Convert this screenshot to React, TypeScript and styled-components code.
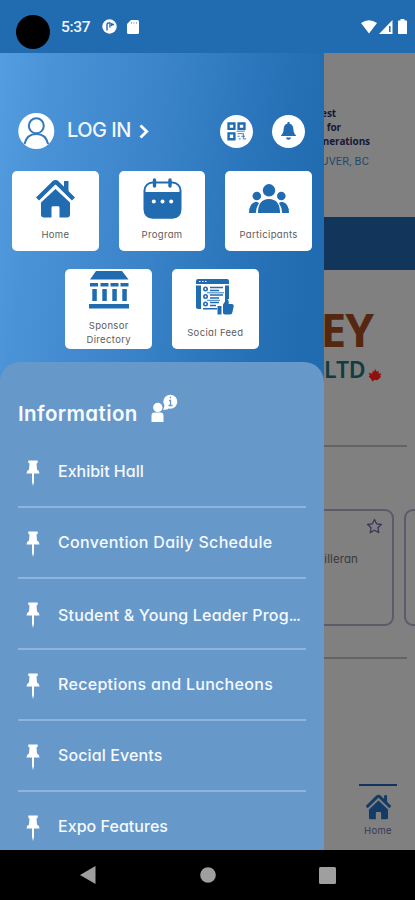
import React from "react";
import styled, { createGlobalStyle } from "styled-components";

const Global = createGlobalStyle`
  * { box-sizing: border-box; }
  html, body { margin: 0; padding: 0; background: #000; }
  body { font-family: Inter, "Open Sans", sans-serif; font-feature-settings: "cv11" 1; }
`;

const BLUE = "#216bb0";

const Phone = styled.div`
  width: 415px;
  height: 900px;
  display: flex;
  flex-direction: column;
  overflow: hidden;
  background: #000;
`;

const StatusBar = styled.header`
  flex: 0 0 53px;
  display: flex;
  align-items: flex-start;
  background: ${BLUE};
  padding: 15px 7px 0 16px;
`;
const Camera = styled.div`
  width: 34px;
  height: 34px;
  border-radius: 50%;
  background: #000;
`;
const Clock = styled.span`
  margin: 3px 11px 0 11px;
  width: 30px;
  font: 500 15.5px/19px Roboto, sans-serif;
  letter-spacing: -0.3px;
  color: #eef5fc;
  white-space: nowrap;
`;
const StatusIcons = styled.div<{ $end?: boolean }>`
  display: flex;
  align-items: center;
  height: 15px;
  margin-top: 4px;
  margin-left: ${(p) => (p.$end ? "auto" : "0")};
  gap: ${(p) => (p.$end ? 1.5 : 10)}px;
`;

const Body = styled.div`
  flex: 0 0 797px;
  display: grid;
  grid-template-columns: 324px 91px;
`;

const Drawer = styled.aside`
  display: flex;
  flex-direction: column;
  height: 797px;
  overflow: hidden;
  background: linear-gradient(98deg, #549de1 0%, #4b93d7 12%, #3b84ca 38%, #2a75bb 60%, ${BLUE} 78%);
`;
const Account = styled.div`
  display: flex;
  align-items: center;
  height: 36px;
  margin: 60px 19px 0 18px;
`;
const LoginText = styled.span`
  margin: 0 7px 2px 12px;
  width: 65px;
  font-size: 20px;
  line-height: 24px;
  font-weight: 500;
  letter-spacing: -0.5px;
  color: #f1f7fd;
  white-space: nowrap;
`;
const RoundButton = styled.div<{ $push?: boolean }>`
  width: 33px;
  height: 33px;
  border-radius: 50%;
  background: #fff;
  display: grid;
  place-items: center;
  margin-left: ${(p) => (p.$push ? "auto" : "19px")};
`;
const Tiles = styled.div`
  display: flex;
  flex-wrap: wrap;
  justify-content: center;
  gap: 18px 20px;
  padding: 0 12px;
  margin-top: 22px;
`;
const Tile = styled.div`
  width: 86.6px;
  height: 80px;
  border-radius: 5px;
  background: #fff;
  display: flex;
  flex-direction: column;
  align-items: center;
`;
const TileIcon = styled.div<{ $h: number }>`
  height: ${(p) => p.$h}px;
  display: flex;
  align-items: center;
  padding-bottom: 2px;
`;
const TileLabel = styled.div`
  display: flex;
  flex-direction: column;
  align-items: center;
  font-size: 9.5px;
  line-height: 13.6px;
  letter-spacing: 0.35px;
  color: #5c5c5c;
  white-space: nowrap;
`;

const Info = styled.section`
  flex: 1;
  min-height: 0;
  margin-top: 13px;
  border-radius: 20px 20px 0 0;
  background: #6698ca;
  padding: 32px 18px 0;
`;
const InfoHead = styled.div`
  display: flex;
  align-items: flex-start;
  height: 43px;
`;
const InfoTitle = styled.h1`
  margin: 7px 14px 0 0;
  width: 119px;
  font-size: 20.5px;
  line-height: 26px;
  font-weight: 600;
  letter-spacing: 0.4px;
  color: #f8fbff;
  white-space: nowrap;
`;
const Item = styled.div`
  display: flex;
  align-items: center;
  height: 71px;
  padding: 3px 0 0 8px;
  border-bottom: 2px solid #8cb4dc;
  &:last-child { border-bottom-color: transparent; }
`;
const ItemText = styled.span<{ $track: number; $low?: boolean }>`
  margin: 0 0 ${(p) => (p.$low ? 1 : 4)}px 18px;
  font-size: 16px;
  line-height: 22px;
  font-weight: 500;
  letter-spacing: ${(p) => p.$track}px;
  color: #f6faff;
  white-space: nowrap;
`;
const Dots = styled.span`
  letter-spacing: -1.3px;
`;

const Page = styled.main`
  height: 797px;
  overflow: hidden;
  background: #808080;
  display: flex;
  flex-direction: column;
`;
const Banner = styled.div`
  height: 164px;
  padding-top: 53px;
  display: flex;
  flex-direction: column;
`;
const BannerLine = styled.div<{ $right: number }>`
  width: ${(p) => p.$right}px;
  display: flex;
  justify-content: flex-end;
  font: 700 10px/14px "Open Sans", sans-serif;
  letter-spacing: -0.1px;
  color: #16183a;
  white-space: nowrap;
`;
const Place = styled(BannerLine)`
  font: 400 11px/15px Roboto, sans-serif;
  margin-top: 6px;
  letter-spacing: 0.2px;
  color: #1f4a6c;
`;
const Stripe = styled.div`
  height: 53px;
  background: #12365b;
`;
const Sponsor = styled.div`
  height: 175px;
  padding-top: 35px;
`;
const SponsorName = styled.div`
  width: 49px;
  display: flex;
  justify-content: flex-end;
  font: 700 46px/48px "Noto Sans", sans-serif;
  letter-spacing: -1px;
  color: #562710;
`;
const SponsorLtd = styled.div`
  display: flex;
  align-items: center;
  gap: 3px;
  margin-top: 2px;
  font: 600 23px/24px "Noto Sans", sans-serif;
  letter-spacing: -0.2px;
  color: #123d40;
  & > svg { margin-top: 14px; }
`;
const Rule = styled.div`
  width: 83px;
  height: 2px;
  background: #646465;
`;
const Cards = styled.div`
  display: flex;
  gap: 10px;
  height: 210px;
  padding-top: 62px;
`;
const Card = styled.div<{ $next?: boolean }>`
  flex: 0 0 ${(p) => (p.$next ? 30 : 70)}px;
  height: 117px;
  border: 2px solid #5b5b6c;
  border-left-width: ${(p) => (p.$next ? 2 : 0)}px;
  border-radius: ${(p) => (p.$next ? "9px 0 0 9px" : "0 9px 9px 0")};
  padding: 7px 9px 0 0;
  display: flex;
  flex-direction: column;
  align-items: flex-end;
`;
const Speaker = styled.div`
  margin: 16px 25px 0 0;
  font-size: 11.5px;
  line-height: 16px;
  letter-spacing: 0.1px;
  color: #3a3a3a;
`;
const Tab = styled.div`
  margin: 125px 0 0 35px;
  width: 38px;
  display: flex;
  flex-direction: column;
  align-items: center;
  border-top: 2px solid #13345f;
  padding-top: 8px;
  gap: 5px;
  font-size: 9.5px;
  line-height: 12px;
  letter-spacing: 0.35px;
  color: #37375a;
`;
const NavBar = styled.nav`
  flex: 1;
  display: flex;
  justify-content: space-between;
  align-items: center;
  padding: 0 79px 0 80px;
`;

const HomeIcon = ({ w = 41, color = BLUE }: { w?: number; color?: string }) => (
  <svg width={w} height={w * 0.95} viewBox="0 0 41 39">
    <path d="M29 2h4.500v11L29 9z" fill={color} />
    <path d="M2.500 20 18.800 4q1.700-1.500 3.400 0L38.500 20" fill="none" stroke={color} strokeWidth="4.400" strokeLinejoin="round" />
    <path d="M20.500 10 35 23.500V36q0 2.500-2.500 2.500h-8V28.800q0-1.500-1.500-1.500h-5q-1.500 0-1.500 1.500v9.700h-8Q6 38.500 6 36V23.500z" fill={color} />
  </svg>
);
const CalendarIcon = () => (
  <svg width="39" height="41" viewBox="0 0 39 41">
    <rect x="1.500" y="4.500" width="36" height="35" rx="8" fill="#fff" stroke={BLUE} strokeWidth="2" />
    <path d="M1 14h37v18q0 8.500-8.500 8.500h-20Q1 40.500 1 32z" fill={BLUE} />
    <path d="M11.500 2v6M27 2v6" stroke={BLUE} strokeWidth="3.400" strokeLinecap="round" />
    <circle cx="10.800" cy="23.500" r="2" fill="#fff" />
    <circle cx="19.500" cy="23.500" r="2" fill="#fff" />
    <circle cx="28.200" cy="23.500" r="2" fill="#fff" />
  </svg>
);
const PeopleIcon = () => (
  <svg width="40" height="29" viewBox="0 0 40 29" fill={BLUE}>
    <circle cx="20" cy="6.300" r="6.200" />
    <circle cx="7.800" cy="12" r="4.300" />
    <circle cx="32.300" cy="12" r="4.300" />
    <path d="M9 29q0-14 11-14t11 14zM0 29q0-10 7-11.300 2 .2 3 1.300Q7.200 23.200 6.800 29zM40 29q0-10-7-11.300-2 .2-3 1.300 2.800 4.200 3.200 10z" />
  </svg>
);
const BankIcon = () => (
  <svg width="40" height="46" viewBox="0 0 40 46" fill={BLUE}>
    <path d="M7 1h26l6.500 8.500H1zM1 13h8v3.500H1zm10.500 0h8v3.500h-8zm10 0h8v3.500h-8zm10 0H39.500v3.500h-8zM3.300 19h4.500v12H3.300zM13.300 19h4.500v12h-4.500zM23.300 19h4.500v12h-4.500zM33.300 19h4.500v12h-4.500zM0 34h40v4.500H0z" />
  </svg>
);
const FeedIcon = () => (
  <svg width="38" height="36" viewBox="0 0 38 36">
    <path d="M2 0h29q2 0 2 2v3H0V2q0-2 2-2z" fill={BLUE} />
    <path d="M3 2.500h1.500m1.500 0h1.500m1.500 0h1.500" stroke="#fff" strokeWidth="1.200" />
    <path d="M0 6.500h5V30H2q-2 0-2-2zM29 6.500h4V20h-4zM7 29h14v1.500H7z" fill={BLUE} />
    <path d="M14 8.500h13M14 11.500h9M14 16h13M14 19h9M14 23.500h9M14 26.500h6" stroke={BLUE} strokeWidth="1.600" />
    <path d="M11 13.800h17M11 21.300h13" stroke={BLUE} strokeWidth=".9" />
    <g fill={BLUE}>
      <circle cx="9.500" cy="10" r="2.500" /><circle cx="9.500" cy="17.500" r="2.500" /><circle cx="9.500" cy="25" r="2.500" />
    </g>
    <g fill="#fff">
      <circle cx="9.500" cy="10" r=".9" /><circle cx="9.500" cy="17.500" r=".9" /><circle cx="9.500" cy="25" r=".9" />
    </g>
    <path d="M27 25.500l2-3V20q3.500-1 3.700 3v2h3q2.300 0 2 2.300L36.500 33q-.3 2.500-2.700 2.500h-5L27 34.500z" fill={BLUE} />
    <path d="M21.500 27h4v8.500h-4z" fill={BLUE} />
  </svg>
);
const UserIcon = () => (
  <svg width="37" height="36" viewBox="0 0 37 36">
    <circle cx="18.300" cy="18" r="18" fill="#fff" />
    <g fill="none" stroke="#3479bd" strokeWidth="2">
      <circle cx="18.300" cy="12.800" r="7.500" />
      <path d="M6.500 31q2.300-10 11.800-10t11.800 10" />
    </g>
  </svg>
);
const QrIcon = () => (
  <svg width="19" height="19" viewBox="0 0 18 18" fill="none" stroke={BLUE}>
    <path d="M1.500 1.500h5.500v5H1.500zM11 1.500h5.500v5H11zM1.500 10.800h5.500v5.500H1.500z" strokeWidth="2.300" />
    <path d="M10 11h5m-5 2.500h2m1.500 0H17M11 16h2m2 0h3M15.500 10.500v5M9 8.700h8" strokeWidth=".8" />
  </svg>
);
const BellIcon = () => (
  <svg width="15" height="18" viewBox="0 0 15 18" fill={BLUE}>
    <path d="M6.500 0h2v1.500Q12 2.500 12.300 6.500q.2 5 2.700 7V14H0v-.5q2.500-2 2.700-7Q3 2.500 6.500 1.500zM5 15.500h5q-.3 2.300-2.500 2.300T5 15.500z" />
  </svg>
);
const InfoIcon = () => (
  <svg width="27" height="28" viewBox="0 0 27 28" fill="#fff">
    <circle cx="6.800" cy="13.500" r="4.700" />
    <path d="M.5 28v-6.500q0-3 3-3h6q3 0 3 3V28zM12 16l2-5.500h5l-2 4.700z" />
    <circle cx="19.300" cy="7.700" r="7" />
    <path d="M18 6.500h1.500v5m-2 0h4M18.700 3.500h1.400" fill="none" stroke="#6698ca" strokeWidth="1.300" />
  </svg>
);
const PinIcon = () => (
  <svg width="14" height="27" viewBox="0 0 14 27" fill="#fff">
    <path d="M2.300.5h9.400v2.300l-1.200.8.5 6q2.500 1.200 2.500 4H8v8.500L7 26l-1-3.900v-8.500H.5q0-2.800 2.500-4l.5-6-1.200-.8z" />
  </svg>
);

const ITEMS: { label: string; track: number; cut?: boolean }[] = [
  { label: "Exhibit Hall", track: 0 },
  { label: "Convention Daily Schedule", track: 0.33 },
  { label: "Student & Young Leader Prog", track: 0.2, cut: true },
  { label: "Receptions and Luncheons", track: 0.3 },
  { label: "Social Events", track: 0.12 },
  { label: "Expo Features", track: 0.04 },
];

export default function App() {
  return (
    <Phone>
      <Global />
      <StatusBar>
        <Camera />
        <Clock>5:37</Clock>
        <StatusIcons>
          <svg width="15" height="15" viewBox="0 0 15 15">
            <circle cx="7.500" cy="7.500" r="7.200" fill="#fff" />
            <path d="M5 11.500V5.500Q5 4 6.500 4H8v4.500M9.300 5.500h2.800M9.700 4v3" fill="none" stroke={BLUE} strokeWidth="1.400" />
          </svg>
          <svg width="12" height="14" viewBox="0 0 12 14">
            <path d="M4 0h6.500Q12 0 12 1.500v11q0 1.500-1.500 1.500h-9Q0 14 0 12.500V4z" fill="#fff" />
            <path d="M4.500 2v2M7 2v2M9.500 2v2" stroke="#9abbe0" />
          </svg>
        </StatusIcons>
        <StatusIcons $end>
          <svg width="16" height="14" viewBox="0 0 16 14"><path d="M0 3Q8-2.500 16 3L8 13.500z" fill="#fff" /></svg>
          <svg width="14" height="14" viewBox="0 0 14 14">
            <path d="M13.500 0v14H0z" fill="#fff" /><path d="M10.800 6v6" stroke={BLUE} strokeWidth="1.500" />
          </svg>
          <svg width="14" height="15" viewBox="0 0 14 15"><path d="M6.500 0h4v1.500h2q.5 0 .5.500v12.500q0 .5-.5.500h-8q-.5 0-.5-.5V2q0-.5.5-.5h2z" fill="#fff" /></svg>
        </StatusIcons>
      </StatusBar>

      <Body>
        <Drawer>
          <Account>
            <UserIcon />
            <LoginText>LOG IN</LoginText>
            <svg width="10" height="15" viewBox="0 0 10 15"><path d="M1.500 1.500 7.700 7.500l-6.200 6" fill="none" stroke="#fff" strokeWidth="2.800" /></svg>
            <RoundButton $push><QrIcon /></RoundButton>
            <RoundButton><BellIcon /></RoundButton>
          </Account>
          <Tiles>
            <Tile><TileIcon $h={57}><HomeIcon /></TileIcon><TileLabel>Home</TileLabel></Tile>
            <Tile><TileIcon $h={57}><CalendarIcon /></TileIcon><TileLabel>Program</TileLabel></Tile>
            <Tile><TileIcon $h={57}><PeopleIcon /></TileIcon><TileLabel>Participants</TileLabel></Tile>
            <Tile>
              <TileIcon $h={50}><BankIcon /></TileIcon>
              <TileLabel><span>Sponsor</span><span>Directory</span></TileLabel>
            </Tile>
            <Tile><TileIcon $h={57}><FeedIcon /></TileIcon><TileLabel>Social Feed</TileLabel></Tile>
          </Tiles>
          <Info>
            <InfoHead><InfoTitle>Information</InfoTitle><InfoIcon /></InfoHead>
            {ITEMS.map(({ label, track, cut }) => (
              <Item key={label}>
                <PinIcon />
                <ItemText $track={track} $low={cut}>{label}{cut && <Dots>...</Dots>}</ItemText>
              </Item>
            ))}
          </Info>
        </Drawer>

        <Page>
          <Banner>
            <BannerLine $right={12}>est</BannerLine>
            <BannerLine $right={17}>for</BannerLine>
            <BannerLine $right={46}>enerations</BannerLine>
            <Place $right={45}>UVER, BC</Place>
          </Banner>
          <Stripe />
          <Sponsor>
            <SponsorName>EY</SponsorName>
            <SponsorLtd>
              LTD
              <svg width="14" height="13" viewBox="0 0 14 14"><path d="M7 0l2 3 2-1v3l3-.5-1.500 3 1 1-4 3.500-2.500-.5-3 2L3 11 0 8l1.500-.500L0 4l4 1 .5-3L6 3z" fill="#930d0d" /></svg>
            </SponsorLtd>
          </Sponsor>
          <Rule />
          <Cards>
            <Card>
              <svg width="17" height="17" viewBox="0 0 17 17"><path d="M8.500 1.500l2.100 4.300 4.800.7-3.500 3.300.9 4.800-4.300-2.300-4.300 2.300.9-4.800-3.500-3.300 4.800-.7z" fill="none" stroke="#36365a" strokeWidth="1.300" strokeLinejoin="round" /></svg>
              <Speaker>illeran</Speaker>
            </Card>
            <Card $next />
          </Cards>
          <Rule />
          <Tab><HomeIcon w={27} color="#123c66" />Home</Tab>
        </Page>
      </Body>

      <NavBar>
        <svg width="16" height="18" viewBox="0 0 16 18"><path d="M0 9 15.500 0v18z" fill="#9f9f9f" /></svg>
        <svg width="16" height="16" viewBox="0 0 16 16"><circle cx="8" cy="8" r="7.800" fill="#9f9f9f" /></svg>
        <svg width="17" height="17" viewBox="0 0 17 17"><rect width="17" height="17" rx="1.500" fill="#9f9f9f" /></svg>
      </NavBar>
    </Phone>
  );
}
